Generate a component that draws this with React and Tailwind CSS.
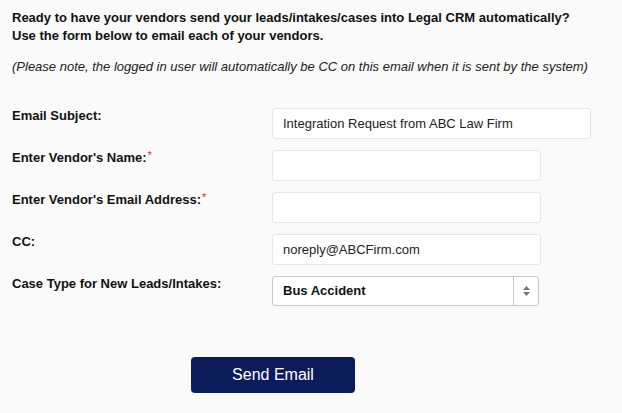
import { useState } from "react";

const fields = [
  { label: "Email Subject:", value: "Integration Request from ABC Law Firm", wide: true },
  { label: "Enter Vendor's Name:", value: "", required: true },
  { label: "Enter Vendor's Email Address:", value: "", required: true },
  { label: "CC:", value: "noreply@ABCFirm.com" },
];

const App = () => {
  const [values, setValues] = useState(fields.map((f) => f.value));
  const [caseType, setCaseType] = useState("Bus Accident");

  return (
    <div
      className="min-h-[413px] bg-[#fafafa] text-[#111] pt-[9px] px-[12px]"
      style={{ fontFamily: '"Liberation Sans", Arial, sans-serif' }}
    >
      <p className="text-[13px] font-bold leading-[18px]">
        Ready to have your vendors send your leads/intakes/cases into Legal CRM automatically?
        <br />
        Use the form below to email each of your vendors.
      </p>
      <p className="mt-[13px] text-[13px] italic leading-[18px] text-[#222]">
        (Please note, the logged in user will automatically be CC on this email when it is sent by the system)
      </p>

      <div className="mt-[32px] flex flex-col gap-[11px]">
        {fields.map((f, i) => (
          <div key={i} className="flex items-start">
            <label className="w-[260px] text-[13px] font-bold leading-[15px]">
              {f.label}
              {f.required && (
                <span className="ml-[1px] align-top text-[11px] font-normal leading-[11px] text-[#e0241b]">
                  *
                </span>
              )}
            </label>
            <input
              type="text"
              value={values[i]}
              onChange={(e) =>
                setValues(values.map((v, j) => (j === i ? e.target.value : v)))
              }
              className={`${f.wide ? "w-[319px]" : "w-[269px]"} h-[31px] rounded-[3px] border border-[#e6e6e6] bg-white px-[10px] text-[13px] text-[#222] outline-none`}
            />
          </div>
        ))}

        <div className="flex items-start">
          <label className="w-[260px] text-[13px] font-bold leading-[15px]">
            Case Type for New Leads/Intakes:
          </label>
          <div className="flex h-[30px] w-[267px] rounded-[3px] border border-[#c8c8c8] bg-white">
            <select
              value={caseType}
              onChange={(e) => setCaseType(e.target.value)}
              className="flex-1 appearance-none bg-transparent px-[10px] text-[13px] font-bold text-[#111] outline-none"
            >
              <option>Bus Accident</option>
              <option>Car Accident</option>
              <option>Slip and Fall</option>
            </select>
            <div className="flex w-[25px] flex-col items-center justify-center gap-[2px] border-l border-[#c8c8c8]">
              <svg width="7" height="4" viewBox="0 0 7 4">
                <path d="M3.5 0L7 4H0z" fill="#777" />
              </svg>
              <svg width="7" height="4" viewBox="0 0 7 4">
                <path d="M0 0h7L3.5 4z" fill="#777" />
              </svg>
            </div>
          </div>
        </div>
      </div>

      <div className="mt-[51px] pl-[179px]">
        <button className="h-[36px] w-[164px] rounded-[4px] bg-[#0c1c5a] text-[16px] text-white">
          Send Email
        </button>
      </div>
    </div>
  );
};

export default App;
